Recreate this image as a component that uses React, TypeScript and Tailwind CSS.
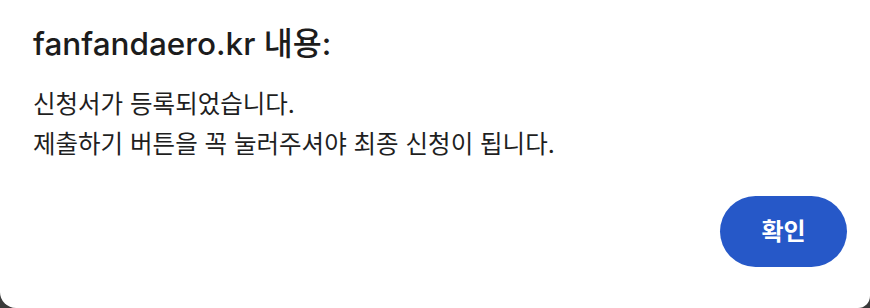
import React from 'react';

const font = { fontFamily: 'Inter, "Noto Sans CJK KR", sans-serif' };

const App: React.FC = () => {
  return (
    <div className="w-[870px] h-[308px] bg-[#3a3a3a] overflow-hidden" style={font}>
      <div className="flex flex-col h-full bg-white rounded-bl-[16px] rounded-br-[12px] pl-[33px] pr-[23px]">
        {/* Title */}
        <h1 className="mt-[24px] text-[31.5px] leading-[40px] font-medium text-[#1c1c1c]">
          fanfandaero.kr 내용:
        </h1>

        {/* Message */}
        <div className="mt-[20px] text-[24.5px] leading-[40px] text-[#1f1f1f]">
          <p>신청서가 등록되었습니다.</p>
          <p>제출하기 버튼을 꼭 눌러주셔야 최종 신청이 됩니다.</p>
        </div>

        {/* Actions */}
        <div className="flex justify-end mt-[32px]">
          <button className="w-[127px] h-[71px] rounded-full bg-[#2658c8] text-white text-[24px] font-semibold">
            확인
          </button>
        </div>
      </div>
    </div>
  );
};

export default App;
